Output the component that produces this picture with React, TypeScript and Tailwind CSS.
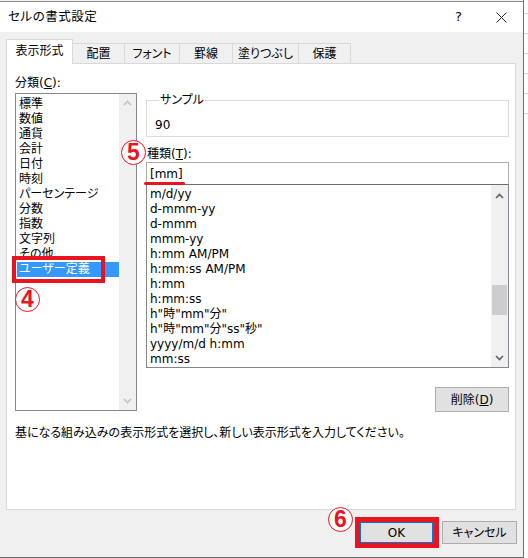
import React from 'react';

const FONT = "font-['DejaVu_Sans','Noto_Sans_CJK_JP',sans-serif] [font-feature-settings:'palt']";

const categories = [
  '標準', '数値', '通貨', '会計', '日付', '時刻', 'パーセンテージ',
  '分数', '指数', '文字列', 'その他', 'ユーザー定義',
];

const formats = [
  'm/d/yy', 'd-mmm-yy', 'd-mmm', 'mmm-yy', 'h:mm AM/PM', 'h:mm:ss AM/PM',
  'h:mm', 'h:mm:ss', 'h"時"mm"分"', 'h"時"mm"分"ss"秒"', 'yyyy/m/d h:mm', 'mm:ss',
];

const tabs = [
  { label: '配置', w: 'w-[52px]' },
  { label: 'フォント', w: 'w-[55px]' },
  { label: '罫線', w: 'w-[53px]' },
  { label: '塗りつぶし', w: 'w-[66px]' },
  { label: '保護', w: 'w-[52px]' },
];

function Chevron({ up, color }: { up?: boolean; color: string }) {
  return (
    <svg width="9" height="6" viewBox="0 0 9 6" className={up ? '' : 'rotate-180'}>
      <path d="M1 5 L4.5 1.5 L8 5" fill="none" stroke={color} strokeWidth="1.6" />
    </svg>
  );
}

function Circled({ n, className }: { n: string; className: string }) {
  return (
    <div
      className={`absolute w-[25px] h-[25px] rounded-full border-[1.5px] border-[#e8141f] bg-white flex items-center justify-center text-[#e8141f] font-bold text-[23px] leading-none font-['Liberation_Sans',sans-serif] ${className}`}
    >
      {n}
    </div>
  );
}

export default function App() {
  return (
    <div className={`relative w-[528px] h-[558px] overflow-hidden flex bg-white text-[12px] text-black ${FONT}`}>
      <div className="w-[524px] h-[558px] flex flex-col border-r border-[#707070]">
        <div className="h-[2px] bg-[#f4f4f4] border-b border-[#8c8c8c]" />
        {/* title bar */}
        <div className="h-[30px] bg-white flex items-center pl-[8px] pr-[16px]">
          <span className="text-[12.5px] tracking-[0.5px]">セルの書式設定</span>
          <div className="ml-auto flex items-center gap-[34px]">
            <span className="text-[13px]">?</span>
            <svg width="11" height="11" viewBox="0 0 11 11">
              <path d="M0.5 0.5 L10.5 10.5 M10.5 0.5 L0.5 10.5" stroke="#222" strokeWidth="1" />
            </svg>
          </div>
        </div>

        {/* body */}
        <div className="flex-1 bg-[#f0f0f0] flex flex-col px-[6px] pt-[8px] border-b border-[#6a6a6a]">
          <div className="flex items-end h-[24px] relative z-10 -mb-px">
            <div className="w-[67px] h-[25px] bg-white border border-b-0 border-[#d9d9d9] flex items-center justify-center pb-[2px]">
              表示形式
            </div>
            {tabs.map((t) => (
              <div
                key={t.label}
                className={`${t.w} h-[21px] bg-[#f0f0f0] border border-l-0 border-[#d9d9d9] flex items-center justify-center`}
              >
                {t.label}
              </div>
            ))}
          </div>

          {/* tab panel */}
          <div className="w-[510px] h-[447px] bg-white border border-[#d9d9d9] flex flex-col pl-[8px] pr-[6px]">
            <div className="flex gap-[9px]">
              {/* categories */}
              <div className="flex flex-col pt-[12px]">
                <div className="leading-[15px] h-[15px]">
                  分類(<span className="underline">C</span>):
                </div>
                <div className="mt-[2px] w-[122px] h-[318px] border border-[#828790] flex">
                  <div className="flex-1 flex flex-col pl-[1px] pt-[3px]">
                    {categories.map((c) => (
                      <div
                        key={c}
                        className={`h-[15px] leading-[15px] pl-[2px] ${c === 'ユーザー定義' ? 'bg-[#3399ff] text-white' : ''}`}
                      >
                        {c}
                      </div>
                    ))}
                  </div>
                  <div className="w-[17px] bg-[#f0f0f0] flex flex-col items-center justify-between py-[6px]">
                    <Chevron up color="#c2c2c2" />
                    <Chevron color="#c2c2c2" />
                  </div>
                </div>
              </div>

              {/* right side */}
              <div className="flex flex-col pt-[29px] w-[363px]">
                <fieldset className="border border-[#dcdcdc] h-[44px] px-[8px]">
                  <legend className="ml-[4px] px-[1px] leading-[15px]">サンプル</legend>
                  <div className="leading-[15px] mt-[10px]">90</div>
                </fieldset>
                <div className="mt-[10px] leading-[15px] h-[15px] pl-[1px]">
                  種類(<span className="underline">T</span>):
                </div>
                <div className="h-[22px] border border-[#adadad] border-b-0 flex items-center pl-[3px]">
                  [mm]
                </div>
                <div className="h-[184px] border border-[#828790] border-t-[#6e6e6e] flex">
                  <div className="flex-1 flex flex-col pt-[2px] pl-[3px]">
                    {formats.map((f) => (
                      <div key={f} className="h-[15px] leading-[15px] whitespace-pre">
                        {f}
                      </div>
                    ))}
                  </div>
                  <div className="w-[17px] bg-[#f0f0f0] flex flex-col items-center pt-[8px] pb-[6px]">
                    <Chevron up color="#606060" />
                    <div className="mt-[86px] w-[15px] h-[30px] bg-[#cdcdcd]" />
                    <div className="mt-auto">
                      <Chevron color="#606060" />
                    </div>
                  </div>
                </div>
                <div className="mt-[19px] self-end w-[74px] h-[25px] bg-[#e1e1e1] border border-[#adadad] flex items-center justify-center">
                  削除(<span className="underline">D</span>)
                </div>
              </div>
            </div>
            <div className="mt-[14px] leading-[15px]">
              基になる組み込みの表示形式を選択し、新しい表示形式を入力してください。
            </div>
          </div>

          {/* buttons */}
          <div className="flex justify-end gap-[8px] mt-[11px]">
            <div className="w-[75px] h-[23px] bg-[#e1e1e1] border-2 border-[#0078d7] flex items-center justify-center">
              OK
            </div>
            <div className="w-[75px] h-[23px] bg-[#e1e1e1] border border-[#adadad] flex items-center justify-center">
              キャンセル
            </div>
          </div>
        </div>
      </div>

      {/* excel sheet peeking at right */}
      <div className="flex-1 bg-white flex flex-col">
        <div className="h-[14px] border-b border-[#d4d4d4]" />
        <div className="h-[20px] border-b border-[#d4d4d4]" />
        <div className="h-[20px] border-b border-[#d4d4d4]" />
        <div className="h-[20px] border-b border-[#d4d4d4]" />
        <div className="h-[20px] border-b border-[#d4d4d4]" />
        <div className="h-[20px] border-b border-[#d4d4d4]" />
      </div>

      {/* annotations */}
      <div className="absolute left-[12px] top-[256px] w-[93px] h-[27px] border-[4px] border-[#e8141f]" />
      <Circled n="4" className="left-[15px] top-[287px]" />
      <Circled n="5" className="left-[121px] top-[140px]" />
      <div className="absolute left-[144px] top-[182px] w-[41px] h-[3px] rounded-full bg-[#e8141f]" />
      <Circled n="6" className="left-[328px] top-[507px]" />
      <div className="absolute left-[355px] top-[517px] w-[84px] h-[31px] border-[5px] border-[#e8141f]" />
    </div>
  );
}
